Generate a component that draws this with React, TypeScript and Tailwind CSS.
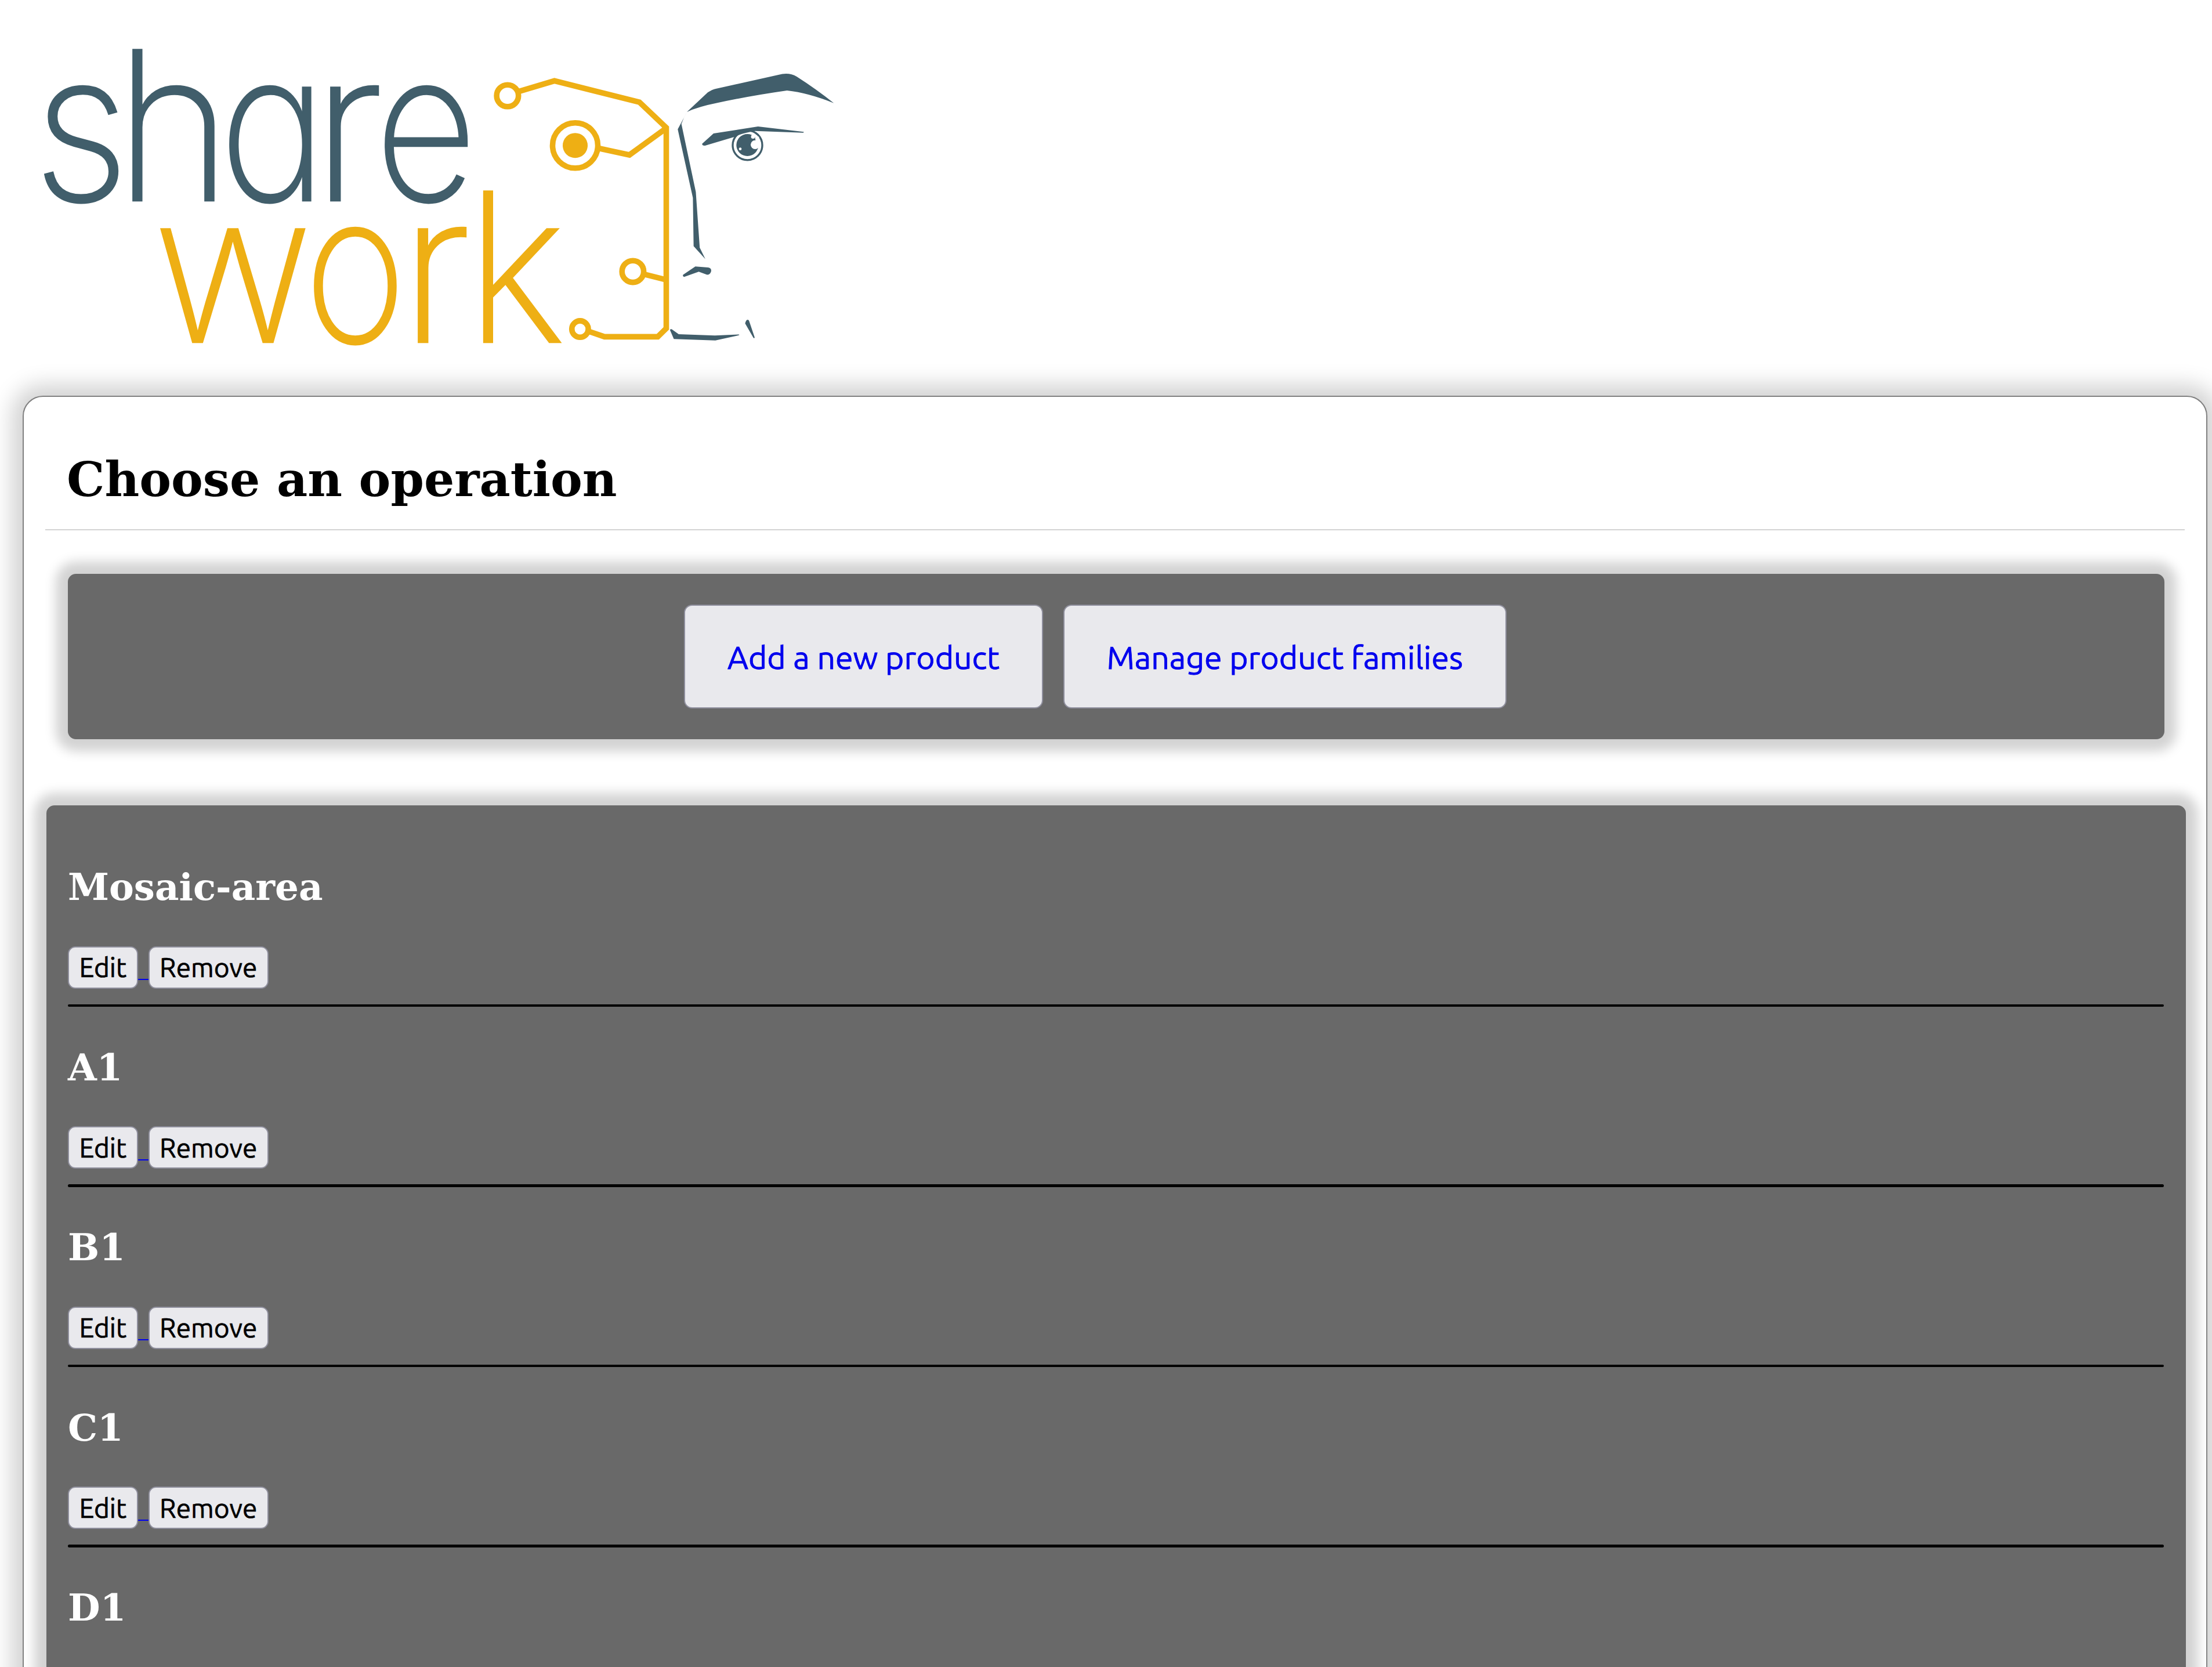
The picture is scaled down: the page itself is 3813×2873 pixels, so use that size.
import React from "react";

const products = ["Mosaic-area", "A1", "B1", "C1", "D1"];

type Letter = { char: string; x: number; width: number };

const share: Letter[] = [
  { char: "s", x: 56.8, width: 166.2 },
  { char: "h", x: 198.3, width: 201.3 },
  { char: "a", x: 377.6, width: 186.3 },
  { char: "r", x: 537.6, width: 124 },
  { char: "e", x: 646.1, width: 176.1 },
];

const work: Letter[] = [
  { char: "w", x: 263.8, width: 275.1 },
  { char: "o", x: 524.4, width: 176.1 },
  { char: "r", x: 688.6, width: 124 },
  { char: "k", x: 803.4, width: 172 },
];

function Word({ letters, y, color }: { letters: Letter[]; y: number; color: string }) {
  return (
    <text y={y} fill={color} stroke={color} strokeWidth="2.4">
      {letters.map((l) => (
        <tspan key={l.char} x={l.x} textLength={l.width} lengthAdjust="spacingAndGlyphs">
          {l.char}
        </tspan>
      ))}
    </text>
  );
}

function Logo() {
  return (
    <svg className="block h-[682px] w-[1500px]" viewBox="0 0 1500 682" fill="none" role="img" aria-label="sharework">
      <g className="font-['Inter',sans-serif] font-extralight [font-feature-settings:'cv11']" fontSize="358">
        <Word letters={share} y={346} color="#415e6b" />
        <Word letters={work} y={590} color="#eeaf14" />
      </g>
      <g stroke="#eeaf14" strokeWidth="9.6">
        <circle cx="874.9" cy="165" r="18.8" />
        <circle cx="991.5" cy="250.7" r="39" />
        <circle cx="1090.9" cy="467.9" r="18.7" />
        <circle cx="999.9" cy="567.1" r="14.2" />
        <path d="M896 157.1 955.7 139.3 1102.2 176.1 1148.5 220V566L1133.8 580.4H1042L1016.8 571.8" />
        <path d="M1034 256 1085 267 1147 222" />
        <path d="M1112.3 473.2 1146 481.6" />
      </g>
      <circle cx="991.5" cy="250.7" r="21.5" fill="#eeaf14" />
      <g fill="#415e6b" transform="translate(1160 110) scale(0.33333)">
        <path d="M72 249 180 148Q200 133 225 128L545 57Q600 42 640 66 740 130 832 203 700 150 590 138 400 165 230 202 130 222 72 249Z" />
        <circle cx="385.5" cy="421" r="76.5" stroke="#415e6b" strokeWidth="10" fill="#fff" />
        <circle cx="385" cy="420" r="57" />
        <circle cx="425" cy="418" r="23" fill="#fff" />
        <path d="M428 398 450 402 444 376 424 380Z" fill="#fff" />
        <path d="M436 430 452 436 452 398 436 400Z" fill="#fff" />
        <circle cx="414" cy="377" r="10" fill="#fff" />
        <circle cx="348" cy="440" r="7" fill="#fff" />
        <path d="M210 360 440 324 676 352Q678 356 672 356L425 347 400 352Q350 362 330 374L166 423Q150 424 151 413Z" />
      </g>
      <g fill="#415e6b" transform="translate(800 60) scale(0.4209 0.35714)">
        <path d="M912 374Q898 402 890 430L949 758 965 1027 988 1082 940 1020 937 787 875 456Z" />
        <path d="M947 1118 1000 1123Q1013 1126 1012 1140 1008 1158 995 1158L961 1143 901 1168Q894 1166 897 1158Z" />
        <path d="M843 1424Q848 1417 853 1423L879 1445 1027 1451 1125 1446Q1129 1448 1125 1450L1029 1475 859 1468Z" />
        <path d="M1151 1393Q1155 1374 1162 1375 1167 1376 1168 1383L1190 1460Q1189 1466 1185 1462Z" />
      </g>
    </svg>
  );
}

function ActionButton({ children }: { children: string }) {
  return (
    <button className="h-[179px] rounded-[14px] border-2 border-[#8f8f9d] bg-[#e9e9ed] px-[72.9px] font-['Ubuntu','Noto_Sans',sans-serif] text-[55.3px] leading-[62px] whitespace-nowrap text-[#0000ee] [-webkit-text-stroke:0.8px]">
      {children}
    </button>
  );
}

function SmallButton({ children }: { children: string }) {
  return (
    <button className="h-[73px] rounded-[13px] border-2 border-[#8f8f9d] bg-[#e9e9ed] px-[17.5px] font-['Ubuntu','Noto_Sans',sans-serif] text-[46px] leading-[52px] text-black [-webkit-text-stroke:0.7px]">
      {children}
    </button>
  );
}

function ProductName({ name }: { name: string }) {
  return <h2 className="h-[75px] text-[64.2px] leading-[75px] font-bold text-white">{name}</h2>;
}

function Product({ name }: { name: string }) {
  return (
    <section className="h-[310.6px]">
      <ProductName name={name} />
      <div className="mt-[64.5px] flex h-[73px]">
        <SmallButton>Edit</SmallButton>
        <span className="mt-[56.5px] h-[2px] w-[18px] bg-[#0000ee]" />
        <SmallButton>Remove</SmallButton>
      </div>
      <div className="mt-[27px] h-[4.5px] w-[3613px] rounded-full bg-black" />
    </section>
  );
}

export default function App() {
  return (
    <div className="h-[2873px] w-[3813px] overflow-hidden bg-white font-['DejaVu_Serif',serif]">
      <header className="h-[682px]">
        <Logo />
      </header>
      <main className="ml-[39px] h-[2400px] w-[3766px] rounded-t-[35px] border-2 border-[#808080] bg-white px-[37px] pt-[94px] shadow-[0_0_37px_19px_#d3d3d3]">
        <h1 className="ml-[37px] h-[96px] text-[82.2px] leading-[96px] font-bold text-black">Choose an operation</h1>
        <div className="mt-[38px] h-[2px] bg-[#d3d3d3]" />
        <nav className="mt-[73px] ml-[37px] flex h-[289px] w-[3618px] items-center justify-center gap-[35px] rounded-[16px] border-2 border-[#d3d3d3] bg-[#696969] pr-[72px] shadow-[0_0_19px_19px_#d3d3d3]">
          <ActionButton>Add a new product</ActionButton>
          <ActionButton>Manage product families</ActionButton>
        </nav>
        <div className="mt-[110px] h-[1800px] w-[3692px] rounded-[16px] border-2 border-[#d3d3d3] bg-[#696969] pt-[103px] pl-[37px] shadow-[0_0_19px_19px_#d3d3d3]">
          {products.slice(0, -1).map((name) => (
            <Product key={name} name={name} />
          ))}
          <ProductName name={products[products.length - 1]} />
        </div>
      </main>
    </div>
  );
}
